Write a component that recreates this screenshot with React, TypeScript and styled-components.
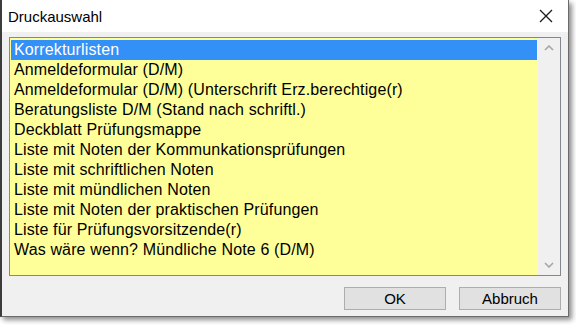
import { useState } from 'react'
import styled, { createGlobalStyle } from 'styled-components'

const GlobalStyle = createGlobalStyle`
  html, body {
    margin: 0;
    padding: 0;
    background: #ffffff;
  }
  body {
    width: 576px;
    height: 325px;
    overflow: hidden;
  }
`

const ITEMS = [
  'Korrekturlisten',
  'Anmeldeformular (D/M)',
  'Anmeldeformular (D/M) (Unterschrift Erz.berechtige(r)',
  'Beratungsliste D/M (Stand nach schriftl.)',
  'Deckblatt Prüfungsmappe',
  'Liste mit Noten der Kommunkationsprüfungen',
  'Liste mit schriftlichen Noten',
  'Liste mit mündlichen Noten',
  'Liste mit Noten der praktischen Prüfungen',
  'Liste für Prüfungsvorsitzende(r)',
  'Was wäre wenn? Mündliche Note 6 (D/M)',
]

const App = () => {
  const [selected, setSelected] = useState(0)

  return (
    <>
      <GlobalStyle />
      <Window>
        <TitleBar>
          <Title>Druckauswahl</Title>
          <CloseButton aria-label="Schließen">
            <svg width="14" height="14" viewBox="0 0 14 14">
              <path d="M1 1 L13 13 M13 1 L1 13" stroke="#1a1a1a" strokeWidth="1.3" fill="none" />
            </svg>
          </CloseButton>
        </TitleBar>
        <Body>
          <ListBox>
            <Items>
              {ITEMS.map((item, i) => (
                <Item key={item} $active={i === selected} onClick={() => setSelected(i)}>
                  {item}
                </Item>
              ))}
            </Items>
            <ScrollBar>
              <Arrow>
                <svg width="10" height="6" viewBox="0 0 10 6">
                  <path d="M1 5 L5 1 L9 5" stroke="#a6a6a6" strokeWidth="1.6" fill="none" />
                </svg>
              </Arrow>
              <Arrow>
                <svg width="10" height="6" viewBox="0 0 10 6">
                  <path d="M1 1 L5 5 L9 1" stroke="#a6a6a6" strokeWidth="1.6" fill="none" />
                </svg>
              </Arrow>
            </ScrollBar>
          </ListBox>
          <ButtonRow>
            <Button>OK</Button>
            <Button>Abbruch</Button>
          </ButtonRow>
        </Body>
      </Window>
    </>
  )
}

const Window = styled.div`
  width: 566px;
  height: 316px;
  display: flex;
  flex-direction: column;
  border-left: 2px solid #3c3c3c;
  border-right: 1px solid #6a6a6a;
  border-bottom: 1px solid #6a6a6a;
  box-shadow: 3px 3px 5px rgba(0, 0, 0, 0.45);
  font-family: 'Liberation Sans', Arial, sans-serif;
`

const TitleBar = styled.div`
  height: 32px;
  display: flex;
  align-items: center;
  justify-content: space-between;
  background: #ffffff;
  padding-left: 6px;
`

const Title = styled.span`
  font-size: 15px;
  color: #000;
`

const CloseButton = styled.button`
  width: 44px;
  height: 32px;
  border: none;
  background: transparent;
  display: flex;
  align-items: center;
  justify-content: center;
  padding: 0;
`

const Body = styled.div`
  flex: 1;
  display: flex;
  flex-direction: column;
  background: #f0f0f0;
  padding: 5px 7px 0 7px;
`

const ListBox = styled.div`
  height: 237px;
  display: flex;
  border: 1px solid #828790;
  background: #ffff99;
`

const Items = styled.ul`
  flex: 1;
  margin: 0;
  padding: 2px 1px;
  list-style: none;
`

const Item = styled.li<{ $active: boolean }>`
  height: 20px;
  line-height: 20px;
  padding-left: 3px;
  font-size: 16px;
  letter-spacing: 0.14px;
  color: ${(p) => (p.$active ? '#ffffff' : '#000000')};
  background: ${(p) => (p.$active ? '#3390f7' : 'transparent')};
  white-space: nowrap;
  cursor: default;
`

const ScrollBar = styled.div`
  width: 22px;
  display: flex;
  flex-direction: column;
  justify-content: space-between;
  background: #f0f0f0;
`

const Arrow = styled.div`
  height: 20px;
  display: flex;
  align-items: center;
  justify-content: center;
`

const ButtonRow = styled.div`
  display: flex;
  justify-content: flex-end;
  gap: 13px;
  margin-top: 11px;
`

const Button = styled.button`
  width: 102px;
  height: 23px;
  border: 1px solid #adadad;
  background: #e1e1e1;
  font-family: 'Liberation Sans', Arial, sans-serif;
  font-size: 15px;
  color: #000;
  padding: 0;
`

export default App
